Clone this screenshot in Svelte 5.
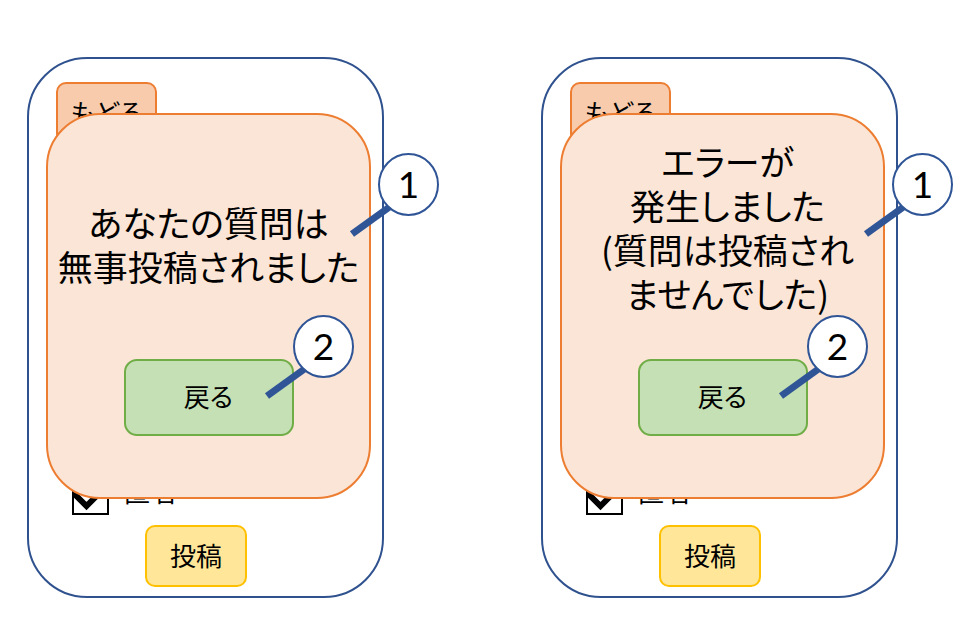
<script>
  const screens = [
    {
      id: 'success',
      lines: ['あなたの質問は', '無事投稿されました']
    },
    {
      id: 'error',
      lines: ['エラーが', '発生しました', '(質問は投稿され', 'ませんでした)']
    }
  ];
</script>

<main>
  {#each screens as screen (screen.id)}
    <section class="phone">
      <div class="form">
        <button type="button" class="back">もどる</button>
        <label class="anonymous">
          <span class="box">
            <input type="checkbox" checked />
            <svg viewBox="0 0 37 37" aria-hidden="true">
              <path d="M1.5 15 L14.5 28 L33 9.5" />
            </svg>
          </span>
          匿名
        </label>
        <button type="submit" class="submit">投稿</button>
      </div>

      <div class="dialog" role="dialog" aria-label={screen.lines.join('')}>
        <p class="message {screen.id}">
          {#each screen.lines as line}
            <span>{line}</span>
          {/each}
        </p>
        <button type="button" class="return">戻る</button>
      </div>

      {#each [1, 2] as number}
        <div class="callout callout-{number}">
          <svg viewBox="0 0 86 86" aria-hidden="true">
            <line x1="-1" y1="81" x2="42" y2="50" />
            <ellipse cx="55.5" cy="31.5" rx="29.5" ry="30.5" />
          </svg>
          <span>{number}</span>
        </div>
      {/each}
    </section>
  {/each}
</main>

<style>
  :global(body) {
    background: #fff;
  }

  main {
    display: grid;
    grid-template-columns: 1fr 1fr;
    gap: 157px;
    padding: 57px 69px 41px 27px;
    color: #000;
    font-family: 'Noto Sans CJK JP', sans-serif;
    font-feature-settings: 'palt';
  }

  button {
    box-sizing: border-box;
    padding: 0 0 3px;
    border: 2px solid;
    color: #000;
    font: inherit;
    font-feature-settings: inherit;
    font-size: 26px;
    line-height: 36px;
  }

  .phone {
    position: relative;
    display: grid;
    border: 2px solid #2f528f;
    border-radius: 60px;
  }

  .form,
  .dialog {
    grid-area: 1 / 1;
  }

  .form {
    display: flex;
    flex-direction: column;
    align-items: flex-start;
    padding: 23px 27px 9px;
  }

  .back {
    width: 101px;
    height: 62px;
    border-color: #ed7d31;
    border-radius: 10px;
    background: #f8cbad;
  }

  .anonymous {
    display: flex;
    align-items: flex-start;
    gap: 15px;
    margin: auto 0 10px 16px;
    font-size: 26px;
    line-height: 26px;
  }

  .box {
    display: grid;
  }

  .box input,
  .box svg {
    grid-area: 1 / 1;
    box-sizing: border-box;
    width: 37px;
    height: 37px;
    margin: 0;
  }

  .box input {
    appearance: none;
    border: 2px solid #000;
    background: #fff;
  }

  .box svg {
    pointer-events: none;
  }

  .box path {
    fill: none;
    stroke: #000;
    stroke-width: 6;
  }

  .submit {
    width: 102px;
    height: 62px;
    margin-left: 89px;
    border-color: #ffc000;
    border-radius: 10px;
    background: #ffe699;
  }

  .dialog {
    position: relative;
    display: flex;
    flex-direction: column;
    align-items: center;
    box-sizing: border-box;
    min-height: 386px;
    margin: 54px 11px 97px 17px;
    padding-bottom: 61px;
    border: 2px solid #ed7d31;
    border-radius: 54px;
    background: #fbe5d6;
  }

  .message {
    display: flex;
    flex: 1;
    flex-direction: column;
    align-items: center;
    margin: 0;
    font-size: 35px;
    line-height: 44px;
    white-space: nowrap;
  }

  .success {
    padding-top: 85px;
  }

  .error {
    padding-top: 24px;
    padding-left: 10px;
  }

  .return {
    width: 170px;
    height: 77px;
    border-color: #70ad47;
    border-radius: 13px;
    background: #c5e0b4;
  }

  .callout {
    position: absolute;
    width: 86px;
    height: 86px;
  }

  .callout-1 {
    top: 94px;
    right: -57px;
  }

  .callout-2 {
    top: 256px;
    right: 28px;
  }

  .callout svg {
    display: block;
    width: 100%;
    height: 100%;
    overflow: visible;
  }

  .callout line {
    stroke: #2f5597;
    stroke-width: 7;
  }

  .callout ellipse {
    fill: #fff;
    stroke: #2f5597;
    stroke-width: 2;
  }

  .callout span {
    position: absolute;
    top: 0;
    right: 0;
    width: 61px;
    font-family: Lato, sans-serif;
    font-size: 37px;
    line-height: 61px;
    text-align: center;
  }
</style>
